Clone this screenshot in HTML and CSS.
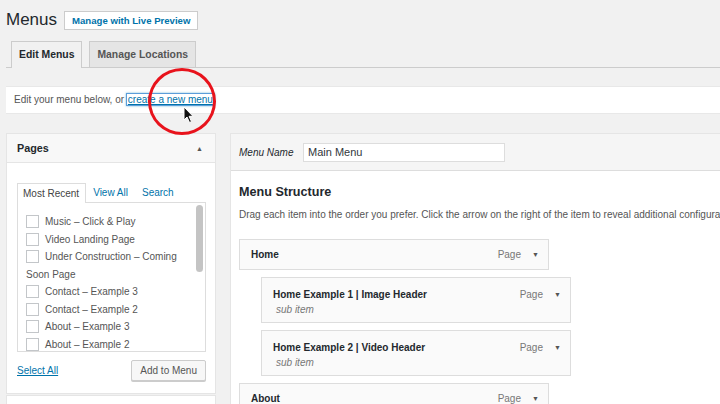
FILE: index.html
```html
<!DOCTYPE html>
<html>
<head>
<meta charset="utf-8">
<link rel="stylesheet" href="styles.css">
</head>
<body>
<div class="wrap">
  <div class="page-head">
    <h1 class="title">Menus</h1>
    <a class="btn-live">Manage with Live Preview</a>
  </div>
  <div class="nav-tabs">
    <span class="nav-tab active">Edit Menus</span>
    <span class="nav-tab">Manage Locations</span>
  </div>
  <div class="notice">
    <span>Edit your menu below, or </span><a class="focus-link">create a new menu</a>
  </div>
  <div class="columns">
    <div class="side">
      <div class="panel">
        <div class="panel-head">
          <span class="panel-title">Pages</span>
          <span class="arrow-up">&#9650;</span>
        </div>
        <div class="panel-body">
          <div class="tabs">
            <span class="tab active">Most Recent</span>
            <span class="tab link">View All</span>
            <span class="tab link">Search</span>
          </div>
          <div class="list">
            <ul class="items">
              <li><span class="cb"></span>Music – Click &amp; Play</li>
              <li><span class="cb"></span>Video Landing Page</li>
              <li><span class="cb"></span>Under Construction – Coming Soon Page</li>
              <li><span class="cb"></span>Contact – Example 3</li>
              <li><span class="cb"></span>Contact – Example 2</li>
              <li><span class="cb"></span>About – Example 3</li>
              <li><span class="cb"></span>About – Example 2</li>
            </ul>
            <span class="scroll-thumb"></span>
          </div>
          <div class="panel-foot">
            <a class="select-all">Select All</a>
            <span class="btn">Add to Menu</span>
          </div>
        </div>
      </div>
      <div class="panel next"></div>
    </div>
    <div class="main">
      <div class="main-head">
        <label class="name-label">Menu Name</label>
        <span class="name-input">Main Menu</span>
      </div>
      <div class="main-body">
        <h3 class="struct-title">Menu Structure</h3>
        <p class="desc">Drag each item into the order you prefer. Click the arrow on the right of the item to reveal additional configuration options.</p>
        <div class="menu-item">
          <div class="mi-row"><span class="mi-title">Home</span><span class="mi-type">Page</span><span class="mi-arrow">&#9660;</span></div>
        </div>
        <div class="menu-item sub">
          <div class="mi-row"><span class="mi-title">Home Example 1 | Image Header</span><span class="mi-type">Page</span><span class="mi-arrow">&#9660;</span></div>
          <div class="mi-sub">sub item</div>
        </div>
        <div class="menu-item sub">
          <div class="mi-row"><span class="mi-title">Home Example 2 | Video Header</span><span class="mi-type">Page</span><span class="mi-arrow">&#9660;</span></div>
          <div class="mi-sub">sub item</div>
        </div>
        <div class="menu-item">
          <div class="mi-row"><span class="mi-title">About</span><span class="mi-type">Page</span><span class="mi-arrow">&#9660;</span></div>
        </div>
      </div>
    </div>
  </div>
</div>
<div class="red-circle"></div>
<svg class="cursor" width="12" height="18" viewBox="0 0 12 18"><path d="M1 1 L1 14 L4 11 L6.5 16.5 L8.5 15.6 L6.1 10.3 L10 10.3 Z" fill="#111" stroke="#fff" stroke-width="1"/></svg>
</body>
</html>
```
FILE: styles.css
```css
html, body {
  margin: 0;
  padding: 0;
  width: 720px;
  height: 404px;
  overflow: hidden;
  background: #f1f1f1;
  font-family: "Liberation Sans", Arial, sans-serif;
  font-size: 10px;
  color: #444;
}
.wrap {
  padding-left: 6px;
  position: relative;
}
.page-head {
  display: flex;
  align-items: center;
  gap: 7px;
  padding-top: 10px;
  height: 20px;
}
.title {
  margin: 0;
  font-size: 17px;
  font-weight: 400;
  color: #23282d;
  line-height: 20px;
}
.btn-live {
  display: inline-block;
  height: 17px;
  line-height: 17px;
  padding: 0 7px;
  border: 1px solid #ccc;
  background: #fff;
  color: #0073aa;
  font-weight: 700;
  font-size: 9.6px;
}
.nav-tabs {
  margin-top: 11px;
  padding-left: 5px;
  display: flex;
  gap: 7px;
  border-bottom: 1px solid #ccc;
  height: 26px;
}
.nav-tab {
  height: 25px;
  line-height: 25px;
  padding: 0 7px;
  border: 1px solid #ccc;
  border-bottom: none;
  background: #e5e5e5;
  color: #555;
  font-size: 10.4px;
  font-weight: 700;
}
.nav-tab.active {
  background: #f1f1f1;
  color: #23282d;
  height: 26px;
  margin-bottom: -1px;
}
.notice {
  margin-top: 18px;
  height: 26px;
  line-height: 26px;
  background: #fff;
  border-top: 1px solid #e8e8e8;
  border-bottom: 1px solid #e8e8e8;
  padding-left: 8px;
  color: #555;
  width: 760px;
}
.focus-link {
  color: #0073aa;
  text-decoration: underline;
  box-shadow: 0 0 0 1px #5b9dd9, 0 0 2px 1px rgba(30,140,190,.6);
  padding: 0 1px;
}
.columns {
  margin-top: 19px;
  display: flex;
  gap: 14px;
  align-items: flex-start;
}
.side {
  width: 210px;
  flex: none;
}
.panel {
  background: #fff;
  border: 1px solid #e5e5e5;
}
.panel.next {
  margin-top: 1px;
  height: 40px;
}
.panel-head {
  height: 28px;
  background: #f8f8f8;
  border-bottom: 1px solid #e5e5e5;
  display: flex;
  align-items: center;
  justify-content: space-between;
  padding: 0 12px 0 10px;
}
.panel-title {
  font-size: 10.8px;
  font-weight: 700;
  color: #23282d;
}
.arrow-up {
  font-size: 7px;
  color: #555;
}
.panel-body {
  padding: 20px 9px 12px 10px;
}
.tabs {
  display: flex;
  height: 19px;
  align-items: flex-end;
}
.tab {
  height: 19px;
  line-height: 19px;
  padding: 0 6px;
  color: #444;
}
.tab.active {
  border: 1px solid #ddd;
  border-bottom: none;
  background: #fff;
  height: 19px;
  margin-bottom: -1px;
  position: relative;
  z-index: 1;
  padding: 0 6px 0 5px;
}
.tab.link {
  color: #0073aa;
  padding: 0 7px;
}
.list {
  position: relative;
  border: 1px solid #ddd;
  height: 148px;
  overflow: hidden;
}
.items {
  list-style: none;
  margin: 0;
  padding: 10px 14px 0 8px;
}
.items li {
  line-height: 17.5px;
  color: #555;
}
.cb {
  display: inline-block;
  width: 11px;
  height: 11px;
  border: 1px solid #c3c6c9;
  background: #fff;
  vertical-align: -3px;
  margin-right: 6px;
}
.scroll-thumb {
  position: absolute;
  right: 2px;
  top: 2px;
  width: 7px;
  height: 67px;
  border-radius: 4px;
  background: #c4c4c4;
}
.panel-foot {
  display: flex;
  align-items: center;
  justify-content: space-between;
  margin-top: 8px;
  padding-left: 0;
}
.select-all {
  color: #0073aa;
  text-decoration: underline;
}
.btn {
  height: 19px;
  line-height: 19px;
  padding: 0 8px;
  border: 1px solid #ccc;
  border-radius: 2px;
  background: #f7f7f7;
  color: #555;
  box-shadow: 0 1px 0 #ccc;
}
.main {
  width: 600px;
  flex: none;
  background: #fff;
  border: 1px solid #e5e5e5;
}
.main-head {
  height: 36px;
  background: #f5f5f5;
  border-bottom: 1px solid #ddd;
  display: flex;
  align-items: center;
  padding-left: 8px;
  gap: 10px;
}
.name-label {
  font-style: italic;
  color: #23282d;
  white-space: nowrap;
  flex: none;
  width: 54px;
}
.name-input {
  display: inline-block;
  width: 196px;
  height: 17px;
  line-height: 17px;
  border: 1px solid #ddd;
  background: #fff;
  padding-left: 4px;
  font-size: 11px;
  color: #32373c;
}
.main-body {
  padding: 13px 0 0 8px;
}
.struct-title {
  margin: 0;
  font-size: 12.6px;
  font-weight: 700;
  color: #23282d;
  line-height: 17px;
}
.desc {
  margin: 7px 0 0;
  white-space: nowrap;
  line-height: 14px;
  color: #555;
}
.menu-item {
  margin-top: 17px;
  border: 1px solid #ddd;
  background: #fafafa;
  padding: 0 9px 0 11px;
  box-sizing: border-box;
  width: 310px;
}
.menu-item + .menu-item {
  margin-top: 7px;
}
.menu-item .mi-row {
  display: flex;
  align-items: center;
  height: 29px;
}
.menu-item.sub {
  margin-left: 22px;
  height: 46px;
  padding-top: 6px;
}
.menu-item.sub .mi-row {
  height: 20px;
}
.mi-title {
  font-weight: 700;
  color: #23282d;
  flex: 1;
}
.mi-type {
  color: #777;
  margin-right: 11px;
}
.mi-arrow {
  font-size: 7px;
  color: #555;
  width: 7px;
}
.mi-sub {
  font-style: italic;
  color: #777;
  padding-left: 3px;
  line-height: 12px;
}
.red-circle {
  position: absolute;
  left: 148px;
  top: 68px;
  width: 62px;
  height: 61px;
  border: 3px solid #e8131c;
  border-radius: 50%;
}
.cursor {
  position: absolute;
  left: 183px;
  top: 106px;
}
```
